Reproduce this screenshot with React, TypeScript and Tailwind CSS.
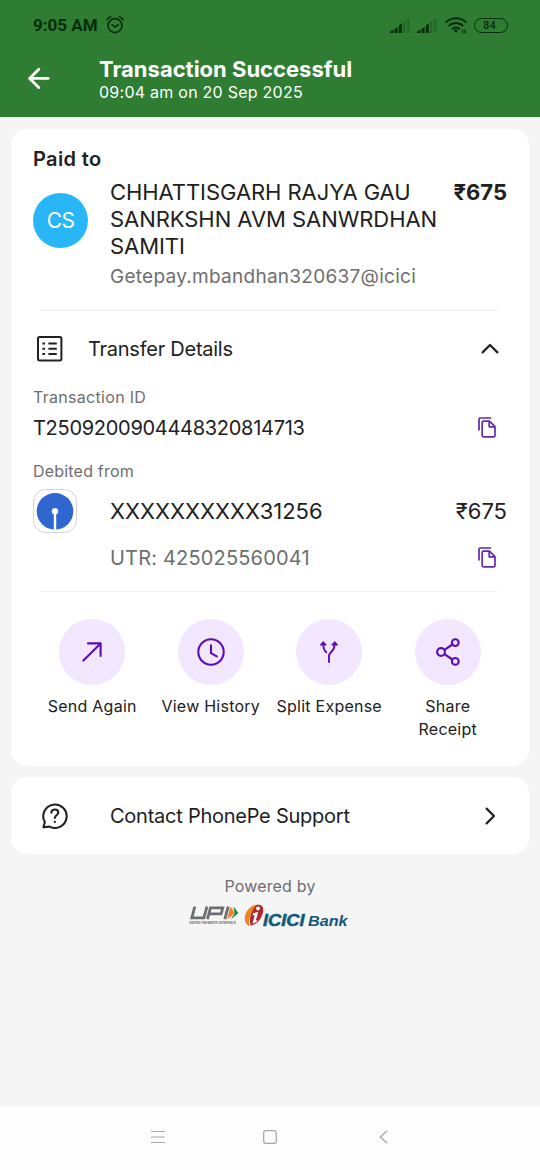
import React from 'react';
import { clsx } from 'clsx';

interface IconProps {
  className?: string;
}

const AlarmIcon: React.FC<IconProps> = ({ className }) => (
  <svg width="20" height="20" viewBox="0 0 20 20" fill="none" stroke="currentColor" strokeWidth="1.6" strokeLinecap="round" strokeLinejoin="round" className={className}>
    <circle cx="10" cy="10.6" r="7" />
    <path d="M7.2 9.8 10 12l3.4-2.4M2 4.6c.9-1.4 2-2.3 3.6-2.8M18 4.6c-.9-1.4-2-2.3-3.6-2.8" />
  </svg>
);

const SignalIcon: React.FC<IconProps> = ({ className }) => (
  <svg width="20" height="15" viewBox="0 0 20 15" fill="currentColor" className={className}>
    <path d="M0 15v-1.2L3.6 11.6V15zM4.6 15v-4.2l3-1.6V15zM8.8 15V7.4l3-1.8V15z" />
    <path d="M13.1 15V4.2l2.2-1.4V15zM17.2 15V1.2l2-1.2v15z" opacity="0.28" />
  </svg>
);

const WifiIcon: React.FC<IconProps> = ({ className }) => (
  <svg width="22" height="18" viewBox="0 0 22 18" fill="none" stroke="currentColor" strokeWidth="2" className={className}>
    <path d="M.7 6.6C6.6.8 15.4.8 21.3 6.6M3.9 10C8 6 14 6 18.1 10M7 13.2c2.3-2.2 5.7-2.2 8 0" />
    <circle cx="10.8" cy="14.8" r="1.7" fill="currentColor" stroke="none" />
    <path d="M17.6 13.2v4M20 13.2v4" strokeWidth="1.1" />
  </svg>
);

const BackArrow: React.FC = () => (
  <svg width="22" height="22" viewBox="0 0 22 22" fill="none" stroke="currentColor" strokeWidth="2.8" strokeLinecap="round" strokeLinejoin="round">
    <path d="M20.2 11.4H1.8M10.8 2.2 1.6 11.4l9.2 9.2" />
  </svg>
);

const DetailsIcon: React.FC = () => (
  <svg width="26" height="26" viewBox="0 0 26 26" fill="none" stroke="currentColor" strokeWidth="2">
    <rect x="1" y="1" width="23.4" height="23.4" rx="1.6" />
    <path d="M5.4 7.6H8M5.4 12.8H8M5.4 18H8M11.4 7.6h8.4M11.4 12.8h8.4M11.4 18h8.4" />
  </svg>
);

const CopyIcon: React.FC = () => (
  <svg width="18" height="21" viewBox="0 0 18 21" fill="none" stroke="currentColor" strokeWidth="1.7" strokeLinejoin="round">
    <path d="M13.2 1h-11C1.500 1 1 1.500 1 2.200v11.200" />
    <path d="M5.400 4.200h6l5.600 5.500v8.900c0 .7-.5 1.200-1.200 1.200H5.400c-.7 0-1.200-.5-1.200-1.200V5.400c0-.7.5-1.200 1.200-1.200Z" />
    <path d="M11.200 4.400v5.400H17" />
  </svg>
);

const SendIcon: React.FC = () => (
  <svg width="20" height="20" viewBox="0 0 20 20" fill="none" stroke="currentColor" strokeWidth="2.1" strokeLinecap="round" strokeLinejoin="round">
    <path d="M1.400 18.600 18.600 1.400M6 1.400h12.600V14" />
  </svg>
);

const HistoryIcon: React.FC = () => (
  <svg width="28" height="28" viewBox="0 0 28 28" fill="none" stroke="currentColor" strokeWidth="2.1" strokeLinecap="round" strokeLinejoin="round">
    <circle cx="14" cy="14" r="12.7" />
    <path d="M14 7.400v7.800l5.800 3.200" />
  </svg>
);

const SplitIcon: React.FC = () => (
  <svg width="20" height="22" viewBox="0 0 20 22" fill="none" stroke="currentColor" strokeWidth="1.9" strokeLinecap="round" strokeLinejoin="round">
    <path d="M10 21v-6c0-4.500 5.600-3.800 5.600-11.800M4.300 3.200c0 4.600 1 6.400 3 8" />
    <path d="m4.300 1 2.700 3H1.600zM15.700 1l2.700 3H13z" fill="currentColor" strokeWidth="1.2" />
  </svg>
);

const ShareIcon: React.FC = () => (
  <svg width="24" height="28" viewBox="0 0 24 28" fill="none" stroke="currentColor" strokeWidth="2.1">
    <circle cx="5" cy="14" r="3.9" />
    <circle cx="19.3" cy="4.6" r="3.4" />
    <circle cx="19.3" cy="23.4" r="3.4" />
    <path d="M8.400 11.800 16.400 6.500M8.400 16.200l8 5.300" />
  </svg>
);

const SupportIcon: React.FC = () => (
  <svg width="26" height="26" viewBox="0 0 26 26" fill="none" stroke="currentColor" strokeWidth="2.1" strokeLinecap="round" strokeLinejoin="round">
    <path d="M1.400 24.200 2.800 19A11.700 11.700 0 1 1 7.600 23.600c-2.200.2-4.200.4-6.200.6Z" />
    <path d="M9.300 9.600C9.600 7.500 11 6.500 12.800 6.500c2 0 3.500 1.200 3.500 3 0 2.700-3.500 2.900-3.500 5.500" />
    <circle cx="12.8" cy="18.9" r="0.7" fill="currentColor" strokeWidth="1" />
  </svg>
);

const BankLogo: React.FC = () => (
  <svg width="44" height="44" viewBox="0 0 44 44">
    <rect x="0.5" y="0.5" width="43" height="43" rx="12" fill="#fff" stroke="#d4d4d8" />
    <circle cx="22" cy="22.3" r="18.3" fill="#2f66d0" />
    <circle cx="22" cy="22.3" r="3.2" fill="#fff" />
    <path d="M22 22v19" stroke="#fff" strokeWidth="2.4" />
  </svg>
);

const UpiLogo: React.FC = () => (
  <svg className="overflow-visible" width="50" height="24" viewBox="0 0 50 24">
    <g fill="none" stroke="#6d6e71" strokeWidth="2.8">
      <path d="M5.800 2.600 2.800 13.800h12L18 2.600" />
      <path d="M18.400 15.200 21.500 3.900h12.300l-1.700 5.900H20.600" />
      <path d="M39.200 2.600 35.800 15.200" />
    </g>
    <path d="M41.400 2.600 45.600 8.900 38.200 15.400z" fill="#f47b20" />
    <path d="M44.400 2.600 49.400 8.900 41.800 15.400 45.600 8.900z" fill="#1c8a44" />
    <text x="0" y="19.600" fontSize="3.8" fontWeight="700" fontFamily="Liberation Sans, sans-serif" fill="#6d6e71" textLength="47" lengthAdjust="spacingAndGlyphs">
      UNIFIED PAYMENTS INTERFACE
    </text>
  </svg>
);

const IciciLogo: React.FC = () => (
  <svg className="overflow-visible" width="105" height="28" viewBox="0 0 105 28">
    <path d="M13.500.8C7 .4.800 7.500.800 14.400c0 4 2 7 5.200 7.600-1-2.500-1.200-5-.4-8C6.900 9 9.600 4 13.500.8Z" fill="#f58220" />
    <path d="M13 .8c5.400-.8 7.200 3.200 5.800 8.400C17.200 15.400 12 20.800 6.800 21.800 4.600 16 6.800 6 13 .8Z" fill="#ae282e" />
    <circle cx="14" cy="4.500" r="1.9" fill="#fff" />
    <path d="M9 9.300l5.200-1.200-2.400 8.500 1.600-.4-.4 1.500-4.500 2 2.200-8.600-2 .4z" fill="#fff" />
    <g fill="#12597a" fontWeight="700" fontStyle="italic" fontFamily="Liberation Sans, sans-serif">
      <text x="19" y="21.500" fontSize="16" stroke="#12597a" strokeWidth="0.5" textLength="41.5" lengthAdjust="spacingAndGlyphs">ICICI</text>
      <text x="64" y="21.500" fontSize="15.5" textLength="39.5" lengthAdjust="spacingAndGlyphs">Bank</text>
    </g>
  </svg>
);

const ACTIONS = [
  { label: 'Send Again', icon: <SendIcon /> },
  { label: 'View History', icon: <HistoryIcon /> },
  { label: 'Split Expense', icon: <SplitIcon /> },
  { label: 'Share Receipt', icon: <ShareIcon />, wrap: true },
];

const StatusBar: React.FC = () => (
  <div className="flex h-[50px] items-center justify-between pl-[33px] pr-8 font-['Roboto',sans-serif] text-[#062d09]">
    <div className="flex items-center">
      <span className="text-[17px] font-bold leading-5">9:05 AM</span>
      <AlarmIcon className="ml-[7px]" />
    </div>
    <div className="flex items-center">
      <SignalIcon />
      <SignalIcon className="ml-[7px]" />
      <WifiIcon className="ml-[8px]" />
      <span className="ml-[7px] flex h-[15px] w-[34px] items-center justify-center rounded-full border-[1.5px] border-current pr-[3px] text-[11px] font-medium leading-none tracking-[0.3px]">
        84
      </span>
    </div>
  </div>
);

const Header: React.FC = () => (
  <header className="h-[117px] bg-[#2e7d32]">
    <StatusBar />
    <div className="flex pl-7 text-white">
      <button className="mt-[17px] h-[22px] w-[22px]" aria-label="Back">
        <BackArrow />
      </button>
      <div className="ml-[49px] pt-[6px]">
        <h1 className="text-[22px] font-bold leading-[26px]">Transaction Successful</h1>
        <p className="text-[16px] leading-5 tracking-[0.25px]">09:04 am on 20 Sep 2025</p>
      </div>
    </div>
  </header>
);

const Payee: React.FC = () => (
  <section className="pt-4">
    <h2 className="text-[20px] font-semibold leading-7 tracking-[0.35px]">Paid to</h2>
    <div className="mt-[6px] flex">
      <div className="mt-[14px] flex h-[55px] w-[55px] shrink-0 items-center justify-center rounded-full bg-[#29b6f6] text-[21px] tracking-[-0.6px] text-white">
        CS
      </div>
      <div className="ml-[22px] w-[340px]">
        <p className="text-[22px] leading-[27px] tracking-[-0.06px]">CHHATTISGARH RAJYA GAU SANRKSHN AVM SANWRDHAN SAMITI</p>
        <p className="mt-[3px] text-[19px] leading-7 tracking-[0.27px] text-[#6e6e6e]">Getepay.mbandhan320637@icici</p>
      </div>
      <span className="ml-auto text-[22px] font-bold leading-[27px]">₹675</span>
    </div>
  </section>
);

const TransferDetails: React.FC = () => (
  <section className="pt-[18px]">
    <div className="flex h-10 items-center pl-1 pr-2">
      <DetailsIcon />
      <h3 className="ml-[25px] text-[20px] leading-7 tracking-[-0.25px]">Transfer Details</h3>
      <svg className="mb-[2px] ml-auto" width="18" height="11" viewBox="0 0 18 11" fill="none" stroke="currentColor" strokeWidth="2.2" strokeLinecap="round" strokeLinejoin="round">
        <path d="M1.600 9.400 9 2l7.400 7.400" />
      </svg>
    </div>

    <p className="mt-[16px] text-[16px] leading-6 tracking-[0.3px] text-[#6e6e6e]">Transaction ID</p>
    <div className="mt-1 flex h-7 items-center justify-between pr-[11px] text-[20px] tracking-[-0.29px]">
      <span className="pt-px">T2509200904448320814713</span>
      <button className="text-[#6229a8]" aria-label="Copy transaction ID">
        <CopyIcon />
      </button>
    </div>

    <p className="mt-[18px] text-[16px] leading-6 tracking-[0.2px] text-[#6e6e6e]">Debited from</p>
    <div className="mt-[6px] flex h-[44px] items-center text-[22px]">
      <BankLogo />
      <span className="ml-[33px]">XXXXXXXXXX31256</span>
      <span className="ml-auto">₹675</span>
    </div>
    <div className="mt-[10px] flex h-7 items-center justify-between pl-[77px] pr-[11px] text-[20px] tracking-[0.18px]">
      <span className="pt-px text-[#6e6e6e]">UTR: 425025560041</span>
      <button className="text-[#6229a8]" aria-label="Copy UTR">
        <CopyIcon />
      </button>
    </div>
  </section>
);

const Divider: React.FC<IconProps> = ({ className }) => <hr className={clsx('ml-[7px] mr-[9px]', className)} />;

const App: React.FC = () => (
  <div className="flex h-[1170px] w-[540px] flex-col overflow-hidden bg-[#f5f5f5] font-['Inter',sans-serif] text-[#212121]">
    <Header />

    <main className="flex-1 px-[11px] pt-3">
      <div className="h-[637px] rounded-[16px] bg-white px-[22px]">
        <Payee />
        <Divider className="mt-[19px] border-[#ebebeb]" />
        <TransferDetails />
        <Divider className="mt-[20px] border-[#f2f2f2]" />
        <div className="mt-[27px] grid grid-cols-4">
          {ACTIONS.map((action) => (
            <button key={action.label} className="flex flex-col items-center">
              <span className="flex h-[66px] w-[66px] items-center justify-center rounded-full bg-[#f2e7fe] text-[#5b0eb4]">
                {action.icon}
              </span>
              <span className={clsx('mt-[10px] text-[16px] leading-[23px] tracking-[0.24px]', action.wrap && 'w-20')}>{action.label}</span>
            </button>
          ))}
        </div>
      </div>

      <button className="mt-[11px] flex h-[77px] w-full items-center rounded-[16px] bg-white pl-[31px] pr-[33px]">
        <SupportIcon />
        <span className="ml-[42px] text-[20px] tracking-[-0.25px]">Contact PhonePe Support</span>
        <svg className="ml-auto" width="11" height="18" viewBox="0 0 11 18" fill="none" stroke="currentColor" strokeWidth="2.2" strokeLinecap="round" strokeLinejoin="round">
          <path d="M1.600 1.600 9 9l-7.400 7.400" />
        </svg>
      </button>

      <div className="mt-5 flex flex-col items-center">
        <p className="text-[16px] leading-6 tracking-[0.18px] text-[#6e6e6e]">Powered by</p>
        <div className="mr-[2px] mt-[6px] flex items-start gap-[5px]">
          <UpiLogo />
          <IciciLogo />
        </div>
      </div>
    </main>

    <nav className="flex h-16 items-center justify-between bg-[#fdfdfd] pb-0.5 pl-[151px] pr-[152px] text-[#a9a9a9]">
      <svg width="14" height="14" viewBox="0 0 14 14" stroke="currentColor" strokeWidth="1.2">
        <path d="M0 1.500h14M0 7h14M0 12.500h14" />
      </svg>
      <svg className="mr-[5px]" width="14" height="14" viewBox="0 0 14 14" fill="none" stroke="currentColor" strokeWidth="1.3">
        <rect x="0.7" y="0.7" width="12.6" height="12.6" rx="2.4" />
      </svg>
      <svg width="9" height="14" viewBox="0 0 9 14" fill="none" stroke="currentColor" strokeWidth="1.4">
        <path d="M8 .8 1.400 7 8 13.200" />
      </svg>
    </nav>
  </div>
);

export default App;
